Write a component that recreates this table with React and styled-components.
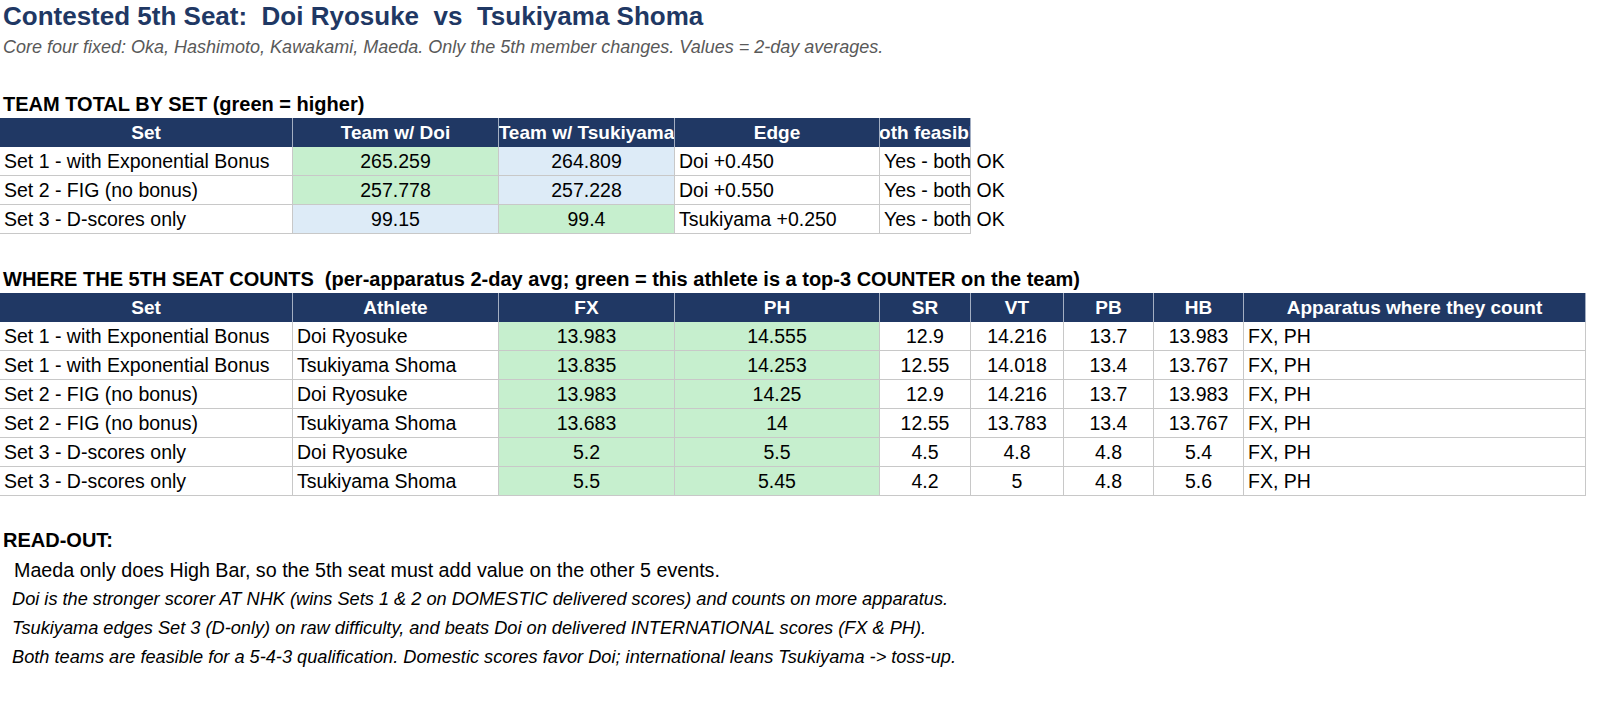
import React from 'react';
import styled, { createGlobalStyle } from 'styled-components';

const GlobalStyle = createGlobalStyle`
  html, body {
    margin: 0;
    padding: 0;
    background: #ffffff;
  }
  body {
    font-family: "Liberation Sans", Arial, sans-serif;
    color: #000000;
  }
`;

const COLS = [293, 206, 176, 205, 91, 93, 90, 90, 342];

const teamRows = [
  { set: 'Set 1 - with Exponential Bonus', doi: '265.259', tsuki: '264.809', win: 'doi', edge: 'Doi +0.450', ok: 'Yes - both OK' },
  { set: 'Set 2 - FIG (no bonus)', doi: '257.778', tsuki: '257.228', win: 'doi', edge: 'Doi +0.550', ok: 'Yes - both OK' },
  { set: 'Set 3 - D-scores only', doi: '99.15', tsuki: '99.4', win: 'tsuki', edge: 'Tsukiyama +0.250', ok: 'Yes - both OK' },
];

const seatRows = [
  ['Set 1 - with Exponential Bonus', 'Doi Ryosuke', '13.983', '14.555', '12.9', '14.216', '13.7', '13.983', 'FX, PH'],
  ['Set 1 - with Exponential Bonus', 'Tsukiyama Shoma', '13.835', '14.253', '12.55', '14.018', '13.4', '13.767', 'FX, PH'],
  ['Set 2 - FIG (no bonus)', 'Doi Ryosuke', '13.983', '14.25', '12.9', '14.216', '13.7', '13.983', 'FX, PH'],
  ['Set 2 - FIG (no bonus)', 'Tsukiyama Shoma', '13.683', '14', '12.55', '13.783', '13.4', '13.767', 'FX, PH'],
  ['Set 3 - D-scores only', 'Doi Ryosuke', '5.2', '5.5', '4.5', '4.8', '4.8', '5.4', 'FX, PH'],
  ['Set 3 - D-scores only', 'Tsukiyama Shoma', '5.5', '5.45', '4.2', '5', '4.8', '5.6', 'FX, PH'],
];

const seatHeaders = ['Set', 'Athlete', 'FX', 'PH', 'SR', 'VT', 'PB', 'HB', 'Apparatus where they count'];

const fills = {
  green: '#c6efce',
  blue: '#ddebf7',
  none: 'transparent',
};

export default function App() {
  return (
    <Sheet>
      <GlobalStyle />
      <Title>Contested 5th Seat:  Doi Ryosuke  vs  Tsukiyama Shoma</Title>
      <Subtitle>
        Core four fixed: Oka, Hashimoto, Kawakami, Maeda. Only the 5th member changes. Values = 2-day averages.
      </Subtitle>

      <SectionLabel $top={34}>TEAM TOTAL BY SET (green = higher)</SectionLabel>
      <Table $cols={COLS.slice(0, 5)}>
        <HeadCell>Set</HeadCell>
        <HeadCell>Team w/ Doi</HeadCell>
        <HeadCell>Team w/ Tsukiyama</HeadCell>
        <HeadCell>Edge</HeadCell>
        <HeadCell>Both feasible</HeadCell>
        {teamRows.map((r) => (
          <React.Fragment key={r.set}>
            <Cell>{r.set}</Cell>
            <Cell $center $fill={r.win === 'doi' ? 'green' : 'blue'}>{r.doi}</Cell>
            <Cell $center $fill={r.win === 'tsuki' ? 'green' : 'blue'}>{r.tsuki}</Cell>
            <Cell>{r.edge}</Cell>
            <Cell $spill>{r.ok}</Cell>
          </React.Fragment>
        ))}
      </Table>

      <SectionLabel $top={33}>
        WHERE THE 5TH SEAT COUNTS  (per-apparatus 2-day avg; green = this athlete is a top-3 COUNTER on the team)
      </SectionLabel>
      <Table $cols={COLS}>
        {seatHeaders.map((h) => (
          <HeadCell key={h}>{h}</HeadCell>
        ))}
        {seatRows.map((r, i) =>
          r.map((v, j) => (
            <Cell
              key={`${i}-${j}`}
              $center={j >= 2 && j <= 7}
              $fill={j === 2 || j === 3 ? 'green' : 'none'}
            >
              {v}
            </Cell>
          ))
        )}
      </Table>

      <SectionLabel $top={32}>READ-OUT:</SectionLabel>
      <Notes>
        <Note $lead>Maeda only does High Bar, so the 5th seat must add value on the other 5 events.</Note>
        <Note>
          Doi is the stronger scorer AT NHK (wins Sets 1 &amp; 2 on DOMESTIC delivered scores) and counts on more apparatus.
        </Note>
        <Note>
          Tsukiyama edges Set 3 (D-only) on raw difficulty, and beats Doi on delivered INTERNATIONAL scores (FX &amp; PH).
        </Note>
        <Note>
          Both teams are feasible for a 5-4-3 qualification. Domestic scores favor Doi; international leans Tsukiyama -&gt; toss-up.
        </Note>
      </Notes>
    </Sheet>
  );
}

const Sheet = styled.div`
  width: 1615px;
  height: 702px;
  overflow: hidden;
  display: flex;
  flex-direction: column;
  align-items: flex-start;
`;

const Title = styled.h1`
  margin: 0 0 0 3px;
  height: 32px;
  line-height: 32px;
  font-size: 26px;
  font-weight: bold;
  color: #1f3864;
  white-space: pre;
`;

const Subtitle = styled.div`
  margin: 4px 0 0 3px;
  height: 22px;
  line-height: 22px;
  font-size: 18px;
  font-style: italic;
  color: #595959;
  white-space: nowrap;
`;

const SectionLabel = styled.div`
  margin: ${(p) => p.$top}px 0 1px 3px;
  height: 24px;
  line-height: 24px;
  font-size: 20px;
  font-weight: bold;
  white-space: pre;
`;

const Table = styled.div`
  display: grid;
  grid-template-columns: ${(p) => p.$cols.map((c) => `${c}px`).join(' ')};
  grid-auto-rows: 29px;
  margin-top: 1px;
`;

const HeadCell = styled.div`
  display: flex;
  align-items: center;
  justify-content: center;
  overflow: hidden;
  white-space: nowrap;
  background: #203864;
  color: #ffffff;
  font-weight: bold;
  font-size: 19px;
  border-right: 1px solid #a3aec2;
  box-sizing: border-box;
`;

const Cell = styled.div`
  display: flex;
  align-items: center;
  justify-content: ${(p) => (p.$center ? 'center' : 'flex-start')};
  padding: 0 ${(p) => (p.$center ? 0 : 4)}px;
  white-space: nowrap;
  overflow: ${(p) => (p.$spill ? 'visible' : 'hidden')};
  font-size: 19.5px;
  background: ${(p) => fills[p.$fill || 'none']};
  border-right: 1px solid #c8c8c8;
  border-bottom: 1px solid #c8c8c8;
  box-sizing: border-box;
`;

const Notes = styled.div`
  margin-top: 3px;
  display: flex;
  flex-direction: column;
`;

const Note = styled.div`
  height: 29px;
  line-height: 29px;
  padding-left: ${(p) => (p.$lead ? 14 : 12)}px;
  font-size: ${(p) => (p.$lead ? 19.7 : 18.2)}px;
  font-style: ${(p) => (p.$lead ? 'normal' : 'italic')};
  white-space: nowrap;
`;
